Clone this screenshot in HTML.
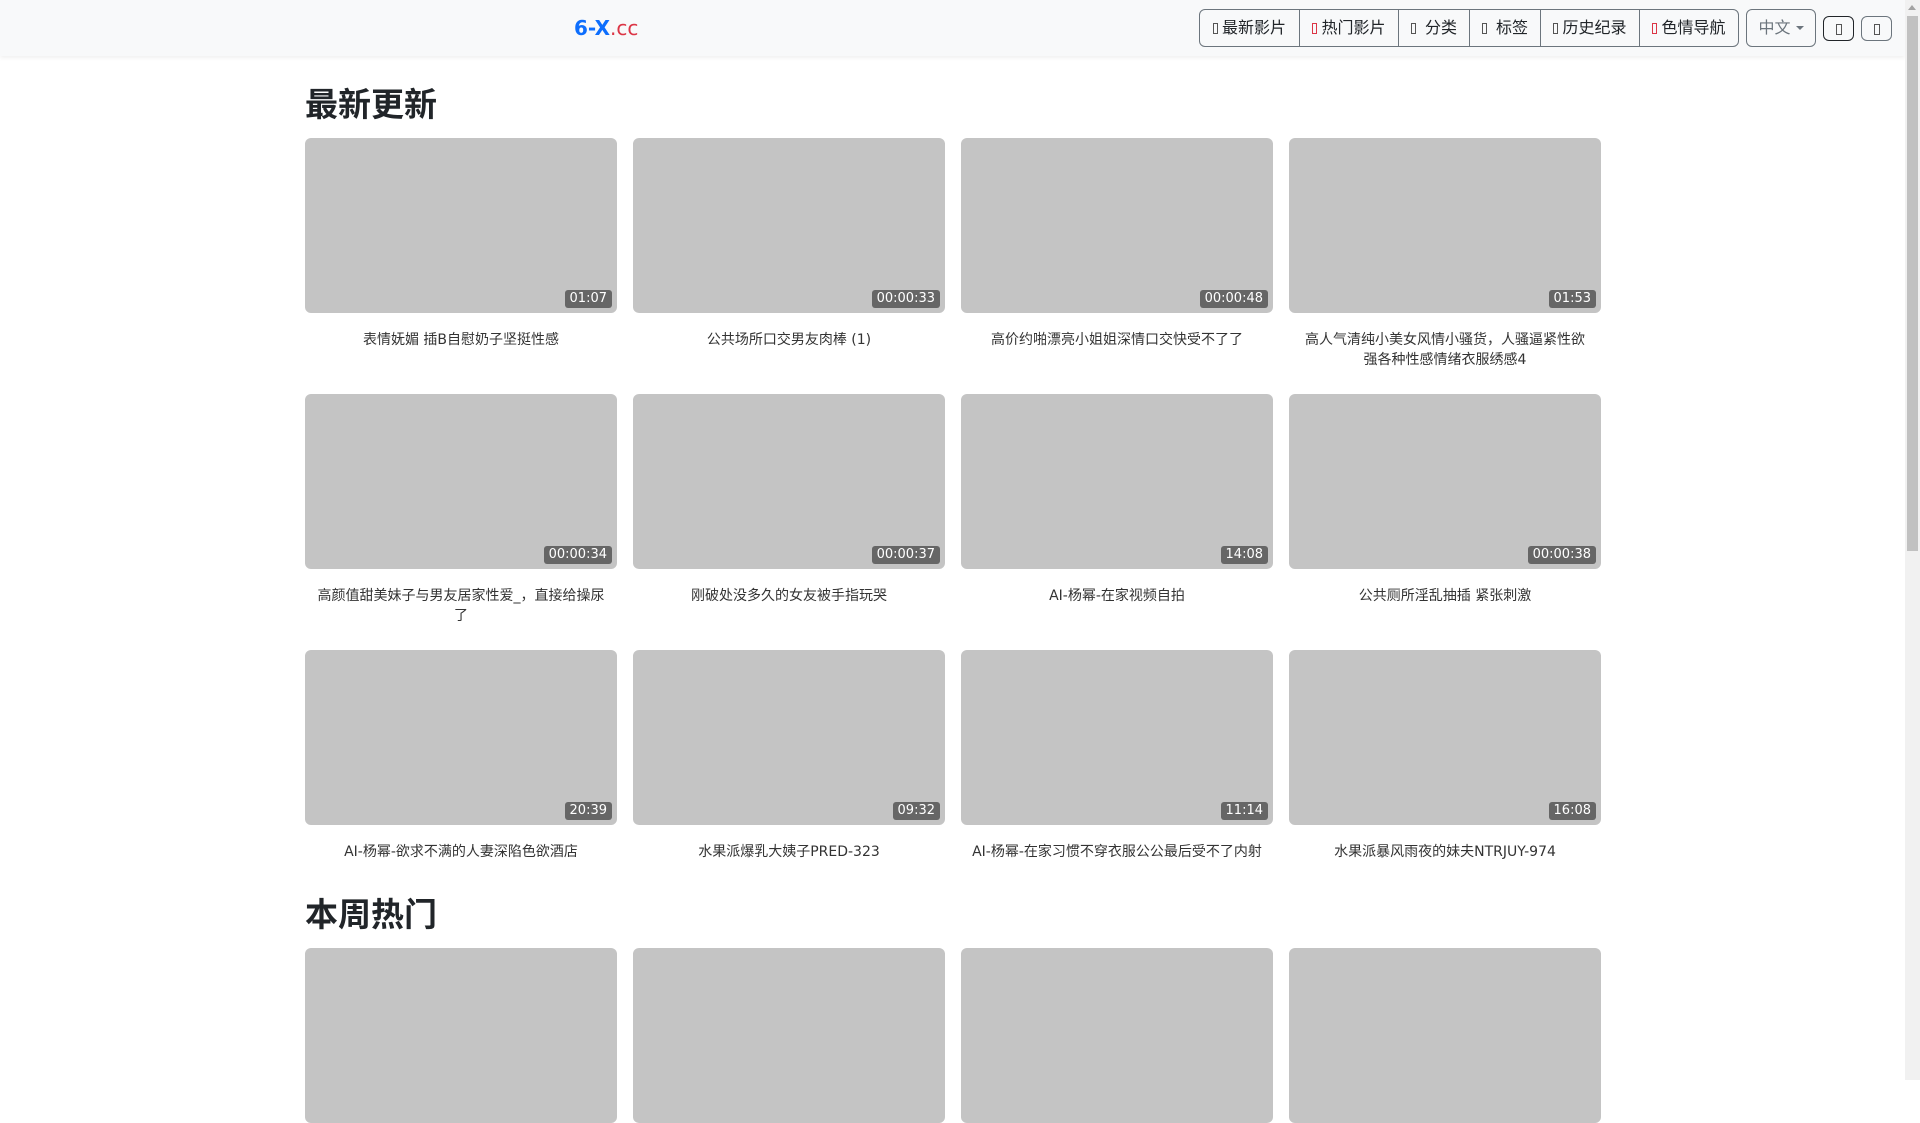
<!DOCTYPE html>
<html><head><meta charset="utf-8"><style>
*{box-sizing:border-box;margin:0;padding:0}
html,body{width:1920px;height:1080px;overflow:hidden;background:#fff;font-family:"DejaVu Sans","Noto Sans CJK SC",sans-serif;color:#212529}
.sb{position:absolute;left:1905px;top:0;width:15px;height:1080px;background:#f1f1f1}
.sb .th{position:absolute;left:2px;top:16px;width:11px;height:535px;background:#c1c1c1}
.sb .ar{position:absolute;left:3px;top:5px;width:0;height:0;border-left:4.5px solid transparent;border-right:4.5px solid transparent;border-bottom:5px solid #a3a3a3}
.hd{position:absolute;left:0;top:0;width:1905px;height:56px;background:#f8f9fa;box-shadow:0 2px 4px rgba(0,0,0,.06)}
.logo{position:absolute;left:574px;top:16px;font-size:20px;font-weight:bold;color:#0d6efd}
.logo span{color:#dc3545;font-weight:normal}
.grp{position:absolute;left:1199px;top:9px;height:38px;display:flex;border:1px solid #6c757d;border-radius:6px;overflow:hidden}
.grp div{height:36px;line-height:36px;font-size:16px;color:#212529;text-align:center;border-left:1px solid #6c757d}
.grp div:first-child{border-left:0}
.i{display:inline-block;width:5px;height:11px;border:1px solid #555;margin-right:4px;vertical-align:-1px}
.i.r{border-color:#dc3545}
.lang{position:absolute;left:1746px;top:9px;width:70px;height:38px;border:1px solid #6c757d;border-radius:6px;color:#6c757d;font-size:16px;line-height:36px;text-align:center}
.lang:after{content:"";display:inline-block;margin-left:5px;vertical-align:3px;border-top:4px solid #6c757d;border-left:4px solid transparent;border-right:4px solid transparent}
.b{position:absolute;top:16px;width:31px;height:25px;border:1px solid #212529;border-radius:6px}
.b:after{content:"";position:absolute;left:12px;top:7px;width:4px;height:9px;border:1px solid #555}
h1{position:absolute;left:305px;font-size:33px;font-weight:bold;color:#212529}
.c{position:absolute;width:312px}
.t{width:312px;height:175px;background:#c4c4c4;border-radius:6px;position:relative}
.d{position:absolute;right:5px;bottom:5px;background:#666;color:#fff;font-size:13px;padding:1px 5px;border-radius:3px;line-height:16px}
.n{margin-top:17px;font-size:14px;line-height:20px;text-align:center;color:#333;padding:0 6px}
</style></head><body>
<div class="hd">
<div class="logo">6-X<span>.cc</span></div>
<div class="grp">
<div style="width:99px"><i class="i"></i>最新影片</div>
<div style="width:99px"><i class="i r"></i>热门影片</div>
<div style="width:71px"><i class="i"></i> 分类</div>
<div style="width:71px"><i class="i"></i> 标签</div>
<div style="width:99px"><i class="i"></i>历史纪录</div>
<div style="width:99px"><i class="i r"></i>色情导航</div>
</div>
<div class="lang">中文</div>
<div class="b" style="left:1823px"></div>
<div class="b" style="left:1861px;border-color:#6c757d"></div>
</div>
<div class="sb"><div class="ar"></div><div class="th"></div></div>
<h1 style="top:78px">最新更新</h1>
<h1 style="top:888px">本周热门</h1>

<div class="c" style="left:305px;top:138px"><div class="t"><span class="d">01:07</span></div><div class="n">表情妩媚 插B自慰奶子坚挺性感</div></div>
<div class="c" style="left:633px;top:138px"><div class="t"><span class="d">00:00:33</span></div><div class="n">公共场所口交男友肉棒 (1)</div></div>
<div class="c" style="left:961px;top:138px"><div class="t"><span class="d">00:00:48</span></div><div class="n">高价约啪漂亮小姐姐深情口交快受不了了</div></div>
<div class="c" style="left:1289px;top:138px"><div class="t"><span class="d">01:53</span></div><div class="n">高人气清纯小美女风情小骚货，人骚逼紧性欲<br>强各种性感情绪衣服绣感4</div></div>

<div class="c" style="left:305px;top:394px"><div class="t"><span class="d">00:00:34</span></div><div class="n">高颜值甜美妹子与男友居家性爱_，直接给操尿<br>了</div></div>
<div class="c" style="left:633px;top:394px"><div class="t"><span class="d">00:00:37</span></div><div class="n">刚破处没多久的女友被手指玩哭</div></div>
<div class="c" style="left:961px;top:394px"><div class="t"><span class="d">14:08</span></div><div class="n">AI-杨幂-在家视频自拍</div></div>
<div class="c" style="left:1289px;top:394px"><div class="t"><span class="d">00:00:38</span></div><div class="n">公共厕所淫乱抽插 紧张刺激</div></div>

<div class="c" style="left:305px;top:650px"><div class="t"><span class="d">20:39</span></div><div class="n">AI-杨幂-欲求不满的人妻深陷色欲酒店</div></div>
<div class="c" style="left:633px;top:650px"><div class="t"><span class="d">09:32</span></div><div class="n">水果派爆乳大姨子PRED-323</div></div>
<div class="c" style="left:961px;top:650px"><div class="t"><span class="d">11:14</span></div><div class="n">AI-杨幂-在家习惯不穿衣服公公最后受不了内射</div></div>
<div class="c" style="left:1289px;top:650px"><div class="t"><span class="d">16:08</span></div><div class="n">水果派暴风雨夜的妹夫NTRJUY-974</div></div>

<div class="c" style="left:305px;top:948px"><div class="t"></div></div>
<div class="c" style="left:633px;top:948px"><div class="t"></div></div>
<div class="c" style="left:961px;top:948px"><div class="t"></div></div>
<div class="c" style="left:1289px;top:948px"><div class="t"></div></div>
</body></html>
